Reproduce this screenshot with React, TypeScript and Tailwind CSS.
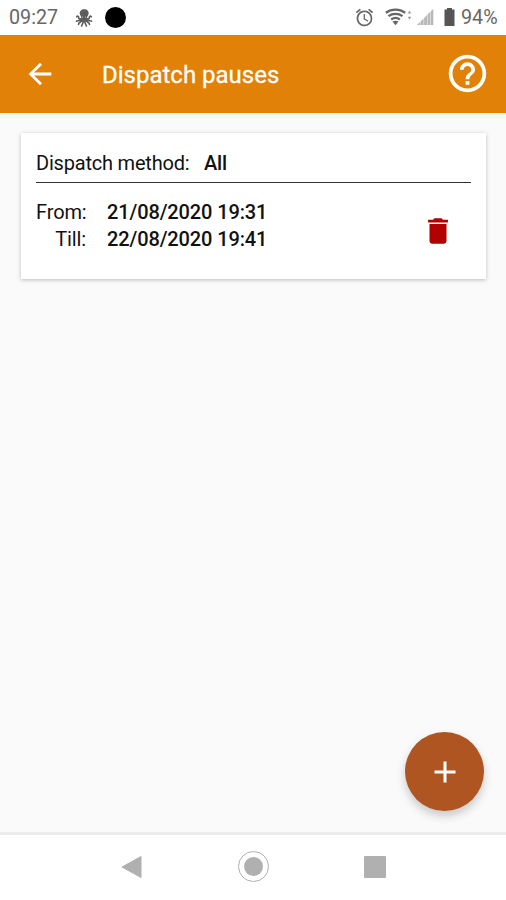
import React from 'react';
import { MdAdd, MdAlarm, MdArrowBack, MdDelete, MdHelpOutline } from 'react-icons/md';

interface Pause {
  id: number;
  method: string;
  from: string;
  till: string;
}

const pauses: Pause[] = [
  { id: 1, method: 'All', from: '21/08/2020 19:31', till: '22/08/2020 19:41' },
];

const OctopusIcon: React.FC = () => (
  <svg className="ml-[16px] h-[18px] w-[18px]" viewBox="0 0 18 18" fill="none" stroke="#5c5c5c" strokeWidth="1.6" strokeLinecap="round">
    <path d="M9.300.3C6.300.3 4.400 2.400 4.800 5c.3 1.600 1.600 2.500 1.500 4.200L5 12.500h8l-1-3.300c0-1.700 1.300-2.600 1.600-4.200.4-2.600-1.300-4.700-4.300-4.700z" fill="#5c5c5c" stroke="none" />
    <path d="M6 9.800C4.500 10.500 3.500 9.500 3.600 8.200 3.700 7 2.300 6.800 1.700 7.800M6 11.200c-1.800 1.200-3.400-.2-4.600 1M6.500 12.200c-1 1.700-3 1-3 3.200M8.200 12c.2 2.500-1.200 3-1.600 5M12 9.800c1.500.7 2.500-.3 2.400-1.600-.1-1.200 1.300-1.400 1.900-.4M12 11.200c1.800 1.200 3.400-.2 4.600 1M11.500 12.200c1 1.700 3 1 3 3.200M9.800 12c-.2 2.500 1.200 3 1.600 5" />
    <path d="M7.500 8h.1M10.700 8h.1" stroke="#ccc" strokeWidth="1.200" />
  </svg>
);

const WifiIcon: React.FC = () => (
  <svg className="ml-[10px] h-[18px] w-[27px]" viewBox="0 0 27 18" fill="none" stroke="#666" strokeWidth="2.300">
    <path d="M.8 4.800C6.500.6 14.500.6 20.200 4.800M3.500 8.200c4-3 10-3 14 0M6.200 11.500c2.500-1.900 6.100-1.900 8.600 0" />
    <path d="M7.500 13.600c1.800-1.200 4.200-1.200 6 0l-3 3.600z" fill="#666" stroke="none" />
    <path d="M24.500 2.800l1.800 2.700h-3.600zM24.500 11.500l-1.800-2.700h3.600z" fill="#999" stroke="none" />
  </svg>
);

const SignalIcon: React.FC = () => (
  <svg className="ml-[5px] h-[18px] w-[17px]" viewBox="0 0 17 18" fill="#b8b8b8">
    <path d="M0 17l3.200-3.200V17zM3.700 13.300l2.900-2.900V17H3.700zM7.100 9.900L10 7v10H7.100zM10.500 6.500l2.800-2.800V17h-2.800zM13.800 3.200L16.300.7V17h-2.500z" />
  </svg>
);

const BatteryIcon: React.FC = () => (
  <svg className="ml-[10px] h-[18px] w-[11px]" viewBox="0 0 11 18" fill="#555">
    <path d="M3 0h5v1.500h2.500V18H.5V1.500H3z" />
  </svg>
);

const StatusBar: React.FC = () => (
  <div className="flex h-[35px] items-center bg-white pl-[9px] pr-2 text-[19.700px] text-[#666]">
    <span className="w-[50px] whitespace-nowrap pt-px">09:27</span>
    <OctopusIcon />
    <div className="ml-[12px] h-[21px] w-[21px] rounded-full bg-black" />
    <div className="ml-auto flex items-center">
      <MdAlarm size={21} />
      <WifiIcon />
      <SignalIcon />
      <BatteryIcon />
      <span className="ml-[6px] w-[37px] whitespace-nowrap pt-px">94%</span>
    </div>
  </div>
);

const Header: React.FC = () => (
  <header className="flex h-[78px] items-center bg-[#e28108] pl-[23px] pr-4 text-white">
    <button aria-label="Back">
      <MdArrowBack size={34} />
    </button>
    <h1 className="ml-[45px] pt-px text-[24px] [-webkit-text-stroke:0.3px_white]">Dispatch pauses</h1>
    <button className="ml-auto pb-px" aria-label="Help">
      <MdHelpOutline size={45} />
    </button>
  </header>
);

const PauseCard: React.FC<{ pause: Pause }> = ({ pause }) => (
  <section className="h-[146px] bg-white px-[15px] pt-[17px] text-[20px] leading-[27px] text-[#111] shadow-[0_1px_4px_rgba(0,0,0,0.25)]">
    <div className="flex border-b-[1.500px] border-[#333] pb-[5px]">
      <span className="w-[168px] whitespace-nowrap tracking-[-0.2px]">Dispatch method:</span>
      <span className="font-medium tracking-[-0.2px]">{pause.method}</span>
    </div>
    <div className="flex items-center justify-between pr-4 pt-4">
      <div className="grid grid-cols-[50px_auto] gap-x-[21px] whitespace-nowrap tracking-[-0.12px]">
        <span className="text-right">From:</span>
        <span className="font-medium">{pause.from}</span>
        <span className="text-right">Till:</span>
        <span className="font-medium">{pause.till}</span>
      </div>
      <button className="pt-[10px] text-[#b00000]" aria-label="Delete pause">
        <MdDelete size={34} />
      </button>
    </div>
  </section>
);

const NavBar: React.FC = () => (
  <nav className="flex h-[68px] items-center justify-between border-t-[3px] border-[#ececec] bg-white pb-[2px] pl-[121px] pr-[120px]">
    <svg className="h-6 w-[21px]" viewBox="0 0 21 24" fill="#b0b0b0">
      <path d="M20 1.500v21L1 12z" stroke="#b0b0b0" strokeLinejoin="round" />
    </svg>
    <div className="flex h-[31px] w-[31px] items-center justify-center rounded-full border-[1.500px] border-[#b0b0b0]">
      <div className="h-[19px] w-[19px] rounded-full bg-[#b0b0b0]" />
    </div>
    <div className="h-[22px] w-[22px] rounded-[1px] bg-[#b0b0b0]" />
  </nav>
);

const App: React.FC = () => (
  <div className="flex h-[900px] w-[506px] flex-col bg-[#fafafa] font-[Roboto,sans-serif]">
    <StatusBar />
    <Header />
    <main className="relative flex-1 bg-linear-to-b from-[#f3f3f3] to-[#fafafa] to-[8px] pl-[21px] pr-5 pt-5">
      {pauses.map((pause) => (
        <PauseCard key={pause.id} pause={pause} />
      ))}
      <button
        className="absolute bottom-[21px] right-[22px] flex h-[79px] w-[79px] items-center justify-center rounded-full bg-[#ae5521] pt-px text-white shadow-[0_5px_10px_rgba(0,0,0,0.2)]"
        aria-label="Add pause"
      >
        <MdAdd size={36} />
      </button>
    </main>
    <NavBar />
  </div>
);

export default App;
